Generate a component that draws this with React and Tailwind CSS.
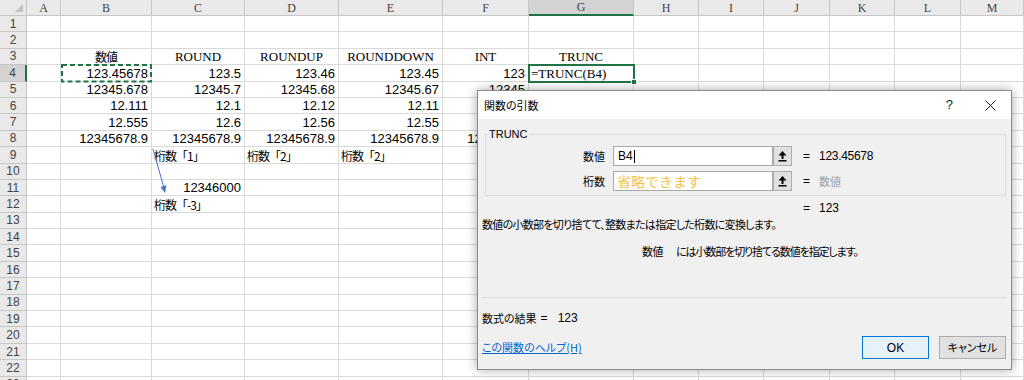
import React from "react";

const LETTERS = ["A", "B", "C", "D", "E", "F", "G", "H", "I", "J", "K", "L", "M"];
const NROWS = 23;

const DATA = {
  3: {
    1: { v: "数値", a: "c", k: "jp" },
    2: { v: "ROUND", a: "c", k: "serif" },
    3: { v: "ROUNDUP", a: "c", k: "serif" },
    4: { v: "ROUNDDOWN", a: "c", k: "serif" },
    5: { v: "INT", a: "c", k: "serif" },
    6: { v: "TRUNC", a: "c", k: "serif" },
  },
  4: {
    1: { v: "123.45678", a: "r", k: "num" },
    2: { v: "123.5", a: "r", k: "num" },
    3: { v: "123.46", a: "r", k: "num" },
    4: { v: "123.45", a: "r", k: "num" },
    5: { v: "123", a: "r", k: "num" },
    6: { v: "=TRUNC(B4)", a: "l", k: "serif" },
  },
  5: {
    1: { v: "12345.678", a: "r", k: "num" },
    2: { v: "12345.7", a: "r", k: "num" },
    3: { v: "12345.68", a: "r", k: "num" },
    4: { v: "12345.67", a: "r", k: "num" },
    5: { v: "12345", a: "r", k: "num" },
  },
  6: {
    1: { v: "12.111", a: "r", k: "num" },
    2: { v: "12.1", a: "r", k: "num" },
    3: { v: "12.12", a: "r", k: "num" },
    4: { v: "12.11", a: "r", k: "num" },
    5: { v: "12", a: "r", k: "num" },
  },
  7: {
    1: { v: "12.555", a: "r", k: "num" },
    2: { v: "12.6", a: "r", k: "num" },
    3: { v: "12.56", a: "r", k: "num" },
    4: { v: "12.55", a: "r", k: "num" },
    5: { v: "12", a: "r", k: "num" },
  },
  8: {
    1: { v: "12345678.9", a: "r", k: "num" },
    2: { v: "12345678.9", a: "r", k: "num" },
    3: { v: "12345678.9", a: "r", k: "num" },
    4: { v: "12345678.9", a: "r", k: "num" },
    5: { v: "12345678", a: "r", k: "num" },
  },
  9: {
    2: { v: "桁数「1」", a: "l", k: "jp" },
    3: { v: "桁数「2」", a: "l", k: "jp" },
    4: { v: "桁数「2」", a: "l", k: "jp" },
  },
  11: {
    2: { v: "12346000", a: "r", k: "num" },
  },
  12: {
    2: { v: "桁数「-3」", a: "l", k: "jp" },
  },
};

function CellText({ d }) {
  if (!d) return null;
  const alignCls =
    d.a === "r" ? "justify-end pr-[3px]" : d.a === "c" ? "justify-center" : "justify-start pl-[2px]";
  const fontCls =
    d.k === "num"
      ? "font-['Liberation_Sans',sans-serif] text-[13px]"
      : d.k === "serif"
      ? "font-['Liberation_Serif',serif] text-[13px]"
      : "font-['Noto_Sans_CJK_JP',sans-serif] text-[12px] tracking-[-1px]";
  return (
    <div className={`absolute inset-0 flex items-end pb-[1px] whitespace-nowrap text-black leading-[12px] ${alignCls} ${fontCls}`}>
      <span>{d.v}</span>
    </div>
  );
}

function Sheet() {
  const cells = [];
  cells.push(
    <div key="corner" className="h-[16px] bg-[#e9e9e9] border-r border-b border-[#c6c6c6] relative">
      <svg className="absolute right-[3px] bottom-[3px]" width="8" height="8" viewBox="0 0 8 8">
        <polygon points="8,0 8,8 0,8" fill="#c4c4c4" />
      </svg>
    </div>
  );
  LETTERS.forEach((L, i) => {
    const sel = i === 6;
    cells.push(
      <div
        key={"h" + L}
        className={
          sel
            ? "h-[16px] bg-[#d3d3d3] border-r border-[#c6c6c6] border-b-2 border-b-[#217346] flex items-center justify-center font-['Liberation_Serif',serif] text-[12px] text-[#444]"
            : "h-[16px] bg-[#e9e9e9] border-r border-b border-[#c6c6c6] flex items-center justify-center font-['Liberation_Serif',serif] text-[12px] text-[#444]"
        }
      >
        {L}
      </div>
    );
  });
  for (let r = 1; r <= NROWS; r++) {
    const sel = r === 4;
    cells.push(
      <div
        key={"r" + r}
        className={
          sel
            ? "h-[16.4px] bg-[#d3d3d3] border-b border-[#c6c6c6] border-r-2 border-r-[#217346] flex items-center justify-center font-['Liberation_Sans',sans-serif] text-[12px] text-[#444] leading-none"
            : "h-[16.4px] bg-[#e9e9e9] border-r border-b border-[#c6c6c6] flex items-center justify-center font-['Liberation_Sans',sans-serif] text-[12px] text-[#444] leading-none"
        }
      >
        {r}
      </div>
    );
    LETTERS.forEach((L, i) => {
      const d = DATA[r] && DATA[r][i];
      cells.push(
        <div key={L + r} className="h-[16.4px] relative border-r border-b border-[#dadada]">
          <CellText d={d} />
        </div>
      );
    });
  }
  return (
    <div className="grid grid-cols-[27px_34px_91px_93px_94px_104px_86px_105px_65px_65px_66px_65px_66px_1fr] bg-white">
      {cells}
    </div>
  );
}

function RefButton() {
  return (
    <div className="w-[19px] h-[20px] bg-[#e1e1e1] border border-[#adadad] flex items-center justify-center">
      <svg width="9" height="11" viewBox="0 0 9 11">
        <polygon points="4.5,0 8.5,4.5 0.5,4.5" fill="#000" />
        <rect x="3.5" y="4" width="2" height="4" fill="#000" />
        <rect x="0.5" y="9" width="8" height="1.5" fill="#000" />
      </svg>
    </div>
  );
}

function Dialog() {
  const jp = "font-['Noto_Sans_CJK_JP',sans-serif] [font-feature-settings:'palt']";
  return (
    <div className="absolute left-[477px] top-[90px] w-[535px] h-[280px] bg-[#f0f0f0] border border-[#8a8a8a] shadow-[0_0_10px_rgba(0,0,0,0.35)] flex flex-col text-black">
      <div className={`h-[28px] bg-white flex items-center pl-[6px] text-[11px] ${jp}`}>
        <span>関数の引数</span>
        <span className="ml-auto mr-[32px] font-['Liberation_Sans',sans-serif] text-[13px] text-[#222]">?</span>
        <svg className="mr-[15px]" width="11" height="11" viewBox="0 0 11 11">
          <path d="M0.5 0.5 L10.5 10.5 M10.5 0.5 L0.5 10.5" stroke="#222" strokeWidth="1" />
        </svg>
      </div>
      <div className="flex flex-col pl-[4px]">
        <fieldset className="mt-[8px] ml-[3px] w-[521px] border border-[#dcdcdc] pt-[5px] pb-[4px]">
          <legend className="ml-[2px] px-[1px] font-['Liberation_Sans',sans-serif] text-[11px] leading-[14px]">TRUNC</legend>
          <div className="flex flex-col gap-[5px]">
            <div className="flex items-center h-[20px]">
              <div className={`w-[119px] text-right text-[11px] ${jp}`}>数値</div>
              <div className="ml-[8px] w-[160px] h-[20px] bg-white border border-[#a8a8a8] flex items-center pl-[4px] font-['Liberation_Sans',sans-serif] text-[12px]">
                <span>B4</span>
                <span className="w-px h-[13px] bg-black ml-[1px]"></span>
              </div>
              <RefButton />
              <span className="ml-[11px] font-['Liberation_Sans',sans-serif] text-[12px]">=</span>
              <span className="ml-[9px] font-['Liberation_Sans',sans-serif] text-[12px] tracking-[-0.3px]">123.45678</span>
            </div>
            <div className="flex items-center h-[20px]">
              <div className={`w-[119px] text-right text-[11px] ${jp}`}>桁数</div>
              <div className="ml-[8px] w-[160px] h-[20px] bg-white border border-[#a8a8a8] flex items-center pl-[3px] text-[14px] text-[#f2c54a] font-['Noto_Sans_CJK_JP',sans-serif]">
                省略できます
              </div>
              <RefButton />
              <span className="ml-[11px] font-['Liberation_Sans',sans-serif] text-[12px]">=</span>
              <span className={`ml-[9px] text-[11px] text-[#a0a0a0] ${jp}`}>数値</span>
            </div>
          </div>
        </fieldset>
        <div className="mt-[4px] h-[16px] flex items-center pl-[321px] font-['Liberation_Sans',sans-serif] text-[12px]">
          <span>=</span>
          <span className="ml-[9px]">123</span>
        </div>
        <div className={`h-[16px] flex items-center text-[11px] tracking-[-0.7px] ${jp}`}>
          数値の小数部を切り捨てて、整数または指定した桁数に変換します。
        </div>
        <div className={`mt-[11px] h-[16px] flex items-center pl-[160px] text-[11px] ${jp}`}>
          <span className="tracking-[-0.5px]">数値</span>
          <span className="ml-[13px] tracking-[-1.1px]">には小数部を切り捨てる数値を指定します。</span>
        </div>
        <div className="mt-[38px] w-[525px] h-px bg-[#dcdcdc]"></div>
        <div className={`mt-[12px] h-[16px] flex items-center text-[11px] ${jp}`}>
          <span>数式の結果</span>
          <span className="ml-[4px] font-['Liberation_Sans',sans-serif] text-[12px]">=</span>
          <span className="ml-[10px] font-['Liberation_Sans',sans-serif] text-[12px]">123</span>
        </div>
        <div className="mt-[10px] flex items-center pr-[5px]">
          <span className={`text-[11px] text-[#0066cc] underline ${jp}`}>この関数のヘルプ(H)</span>
          <div className="ml-auto w-[67px] h-[23px] bg-[#e5f1fb] border border-[#0078d7] flex items-center justify-center font-['Liberation_Sans',sans-serif] text-[12px]">
            OK
          </div>
          <div className={`ml-[10px] w-[67px] h-[23px] bg-[#e1e1e1] border border-[#adadad] flex items-center justify-center text-[11px] ${jp}`}>
            キャンセル
          </div>
        </div>
      </div>
    </div>
  );
}

export default function App() {
  return (
    <div className="relative w-[1024px] h-[380px] overflow-hidden bg-white">
      <Sheet />
      <svg className="absolute left-0 top-0 pointer-events-none" width="1024" height="380">
        <rect x="62" y="65" width="89" height="16.5" fill="none" stroke="#217346" strokeWidth="2" strokeDasharray="5 3" />
        <line x1="153" y1="149" x2="164" y2="188" stroke="#4472c4" strokeWidth="1" />
        <polygon points="165,193 166.4,185.3 160.6,186.9" fill="#4472c4" />
      </svg>
      <div className="absolute left-[528px] top-[64px] w-[107px] h-[18.5px] border-2 border-[#217346] pointer-events-none">
        <div className="absolute right-[-4px] bottom-[-4px] w-[6px] h-[6px] bg-[#217346] border border-white"></div>
      </div>
      <Dialog />
    </div>
  );
}
